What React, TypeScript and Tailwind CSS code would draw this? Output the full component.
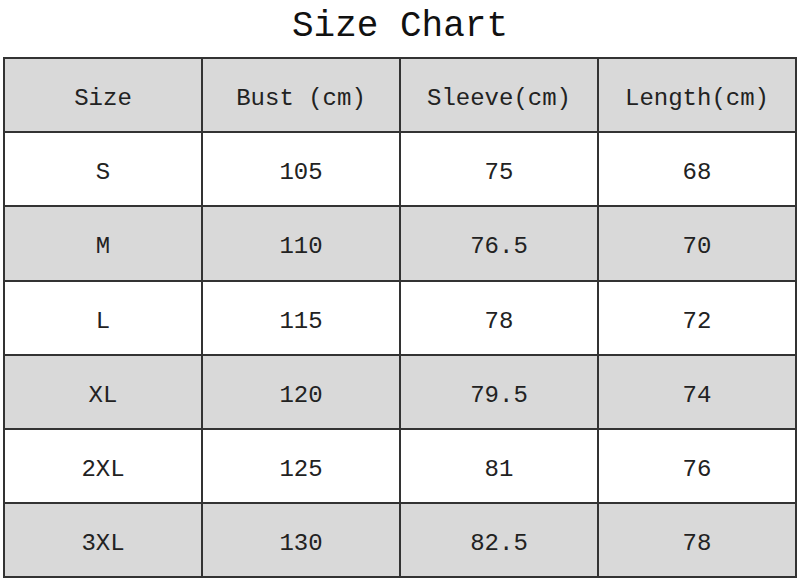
import React from 'react';

const headers = ['Size', 'Bust (cm)', 'Sleeve(cm)', 'Length(cm)'];

const rows: string[][] = [
  ['S', '105', '75', '68'],
  ['M', '110', '76.5', '70'],
  ['L', '115', '78', '72'],
  ['XL', '120', '79.5', '74'],
  ['2XL', '125', '81', '76'],
  ['3XL', '130', '82.5', '78'],
];

export default function App() {
  const cell = "border-2 border-[#333333] text-center align-middle h-[74.2px] pt-[8px] text-[24px] text-[#222222]";

  return (
    <div className="w-[800px] h-[586px] bg-white font-['Liberation_Mono',monospace] overflow-hidden">
      <h1 className="h-[57px] flex items-center justify-center text-[36px] leading-none text-[#111111] pb-[3px]">
        Size Chart
      </h1>
      <table className="ml-[3px] w-[794px] table-fixed border-collapse">
        <thead>
          <tr className="bg-[#d9d9d9]">
            {headers.map(h => (
              <th key={h} className={`${cell} font-normal`}>{h}</th>
            ))}
          </tr>
        </thead>
        <tbody>
          {rows.map((row, i) => (
            <tr key={row[0]} className={i % 2 === 1 ? 'bg-[#d9d9d9]' : 'bg-white'}>
              {row.map((v, j) => (
                <td key={j} className={cell}>{v}</td>
              ))}
            </tr>
          ))}
        </tbody>
      </table>
    </div>
  );
}
